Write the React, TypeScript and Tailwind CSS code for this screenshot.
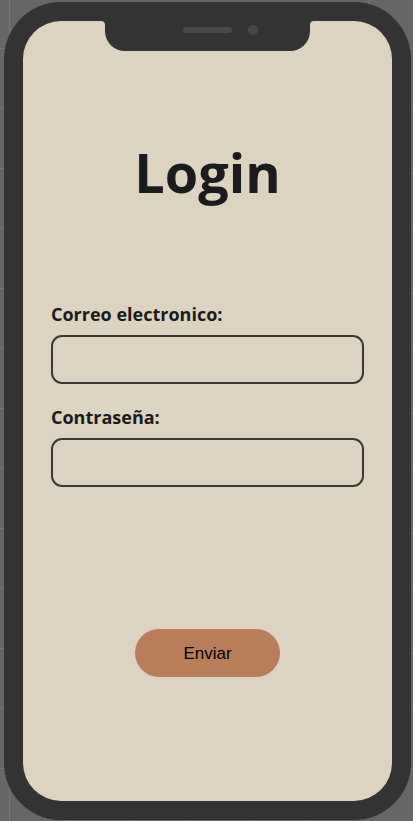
import type { ReactNode } from "react";

function Notch() {
  return (
    <div className="flex items-start justify-center" aria-hidden="true">
      <svg className="size-1 fill-[#333333]" viewBox="0 0 4 4">
        <path d="M0 0H4V4A4 4 0 0 0 0 0Z" />
      </svg>
      <div className="flex h-[30px] w-[205px] justify-end gap-4 rounded-b-[20px] bg-[#333333] pt-1 pr-[52px]">
        <span className="mt-[2px] h-[6px] w-[49px] rounded-full bg-[#484848]" />
        <span className="size-[10px] rounded-full bg-[#484848]" />
      </div>
      <svg className="size-1 fill-[#333333]" viewBox="0 0 4 4">
        <path d="M4 0H0V4A4 4 0 0 1 4 0Z" />
      </svg>
    </div>
  );
}

function PhoneFrame({ children }: { children: ReactNode }) {
  return (
    <div className="flex grow flex-col rounded-[57px] bg-[#333333] p-[19px]">
      <div className="flex grow flex-col rounded-[38px] bg-[#dcd4c1]">
        <Notch />
        {children}
      </div>
    </div>
  );
}

function Field({ id, label, type }: { id: string; label: string; type: string }) {
  return (
    <div className="flex flex-col gap-2">
      <label htmlFor={id} className="text-[18px] leading-[26px] font-bold">
        {label}
      </label>
      <input
        id={id}
        type={type}
        className="h-[49px] w-full rounded-[11px] border-2 border-[#3b3935] bg-transparent px-3 outline-none"
      />
    </div>
  );
}

export default function App() {
  return (
    <div className="flex min-h-screen flex-col bg-[#666666] bg-[linear-gradient(to_right,#747474_1px,transparent_1px),linear-gradient(to_bottom,#747474_1px,transparent_1px)] bg-[size:60px_60px] bg-[position:9px_48px] pt-[2px] pr-[2px] pb-px pl-1 font-['Open_Sans',sans-serif] text-[#1b1b1b]">
      <PhoneFrame>
        <main className="flex grow flex-col px-7 pt-[83px]">
          <h1 className="text-center text-[54px] leading-[76px] font-bold">Login</h1>
          <form className="flex flex-col pt-[91px]" onSubmit={(e) => e.preventDefault()}>
            <div className="flex flex-col gap-5">
              <Field id="email" label="Correo electronico:" type="email" />
              <Field id="password" label="Contraseña:" type="password" />
            </div>
            <button
              type="submit"
              className="mt-[142px] h-12 w-[145px] self-center rounded-full bg-[#b87e5a] pt-px font-['Liberation_Sans',Arial,sans-serif] text-[17px] text-black"
            >
              Enviar
            </button>
          </form>
        </main>
      </PhoneFrame>
    </div>
  );
}
